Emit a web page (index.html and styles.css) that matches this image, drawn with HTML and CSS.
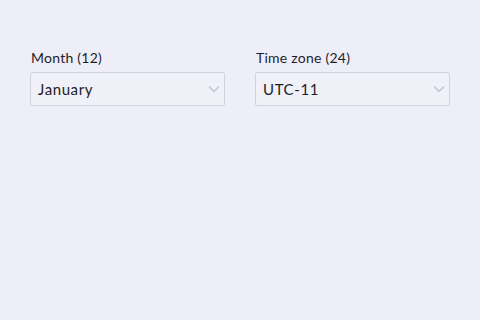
FILE: index.html
```html
<!DOCTYPE html>
<html>
<head>
<meta charset="utf-8">
<link rel="stylesheet" href="styles.css">
</head>
<body>
<div class="row">
  <div class="field">
    <div class="label">Month (12)</div>
    <div class="select">
      <span class="value">January</span>
      <svg class="chev" width="12" height="8" viewBox="0 0 12 8"><path d="M1 1.5 L6 6.5 L11 1.5" fill="none" stroke="#c4c4d0" stroke-width="1.5"/></svg>
    </div>
  </div>
  <div class="field">
    <div class="label">Time zone (24)</div>
    <div class="select">
      <span class="value">UTC-11</span>
      <svg class="chev" width="12" height="8" viewBox="0 0 12 8"><path d="M1 1.5 L6 6.5 L11 1.5" fill="none" stroke="#c4c4d0" stroke-width="1.5"/></svg>
    </div>
  </div>
</div>
</body>
</html>
```
FILE: styles.css
```css
html, body {
  margin: 0;
  padding: 0;
  background: #eeeef8;
  width: 480px;
  height: 320px;
  overflow: hidden;
  font-family: "Lato", "Noto Sans", sans-serif;
  color: #1e1e28;
}
.row {
  display: flex;
  gap: 30px;
  padding: 49px 30px 0 30px;
}
.field {
  flex: 1;
  display: flex;
  flex-direction: column;
}
.label {
  font-size: 14px;
  line-height: 18px;
  margin-bottom: 5px;
  padding-left: 1px;
  letter-spacing: 0.25px;
}
.select {
  height: 32px;
  border: 1px solid #d2d2dc;
  border-radius: 2px;
  background: #f0f0f9;
  display: flex;
  align-items: center;
  justify-content: space-between;
  padding: 0 4px 0 7px;
}
.value {
  font-size: 15px;
  letter-spacing: 0.6px;
}
.chev {
  display: block;
}
```
